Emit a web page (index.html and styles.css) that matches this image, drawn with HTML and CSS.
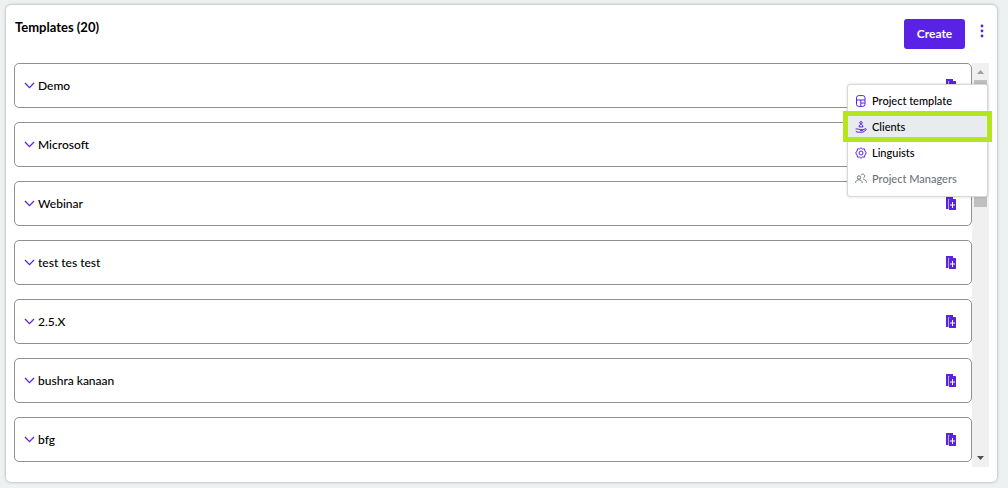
FILE: index.html
```html
<!DOCTYPE html>
<html lang="en">
<head>
    <meta charset="UTF-8">
    <meta name="viewport" content="width=device-width, initial-scale=1.0">
    <title>Templates</title>
    <link rel="stylesheet" href="styles.css">
</head>
<body>

<!-- Shared icons -->
<svg class="sprite" aria-hidden="true">
    <symbol id="chevron" viewBox="0 0 12 8">
        <path d="M1 1 5.500 5.600 10 1" fill="none" stroke="currentColor" stroke-width="1.300"/>
    </symbol>
    <symbol id="copy" viewBox="0 0 12 13">
        <path d="M1 0h7v2H3v10H1z" fill="currentColor"/>
        <path d="M3 2h1v10H3z" fill="#b9a5f5"/>
        <rect x="4" y="2" width="7" height="11" rx=".5" fill="currentColor"/>
        <path d="M7.500 5v6M5 8h5" stroke="#fff" stroke-width="1"/>
    </symbol>
</svg>

<main class="card">
    <header class="card-header">
        <h1>Templates (20)</h1>
        <div class="actions">
            <button type="button" class="create">Create</button>
            <button type="button" class="more" aria-label="More options">
                <svg width="4" height="14" viewBox="0 0 4 14"><g fill="currentColor"><circle cx="2" cy="2" r="1.400"/><circle cx="2" cy="7" r="1.400"/><circle cx="2" cy="12" r="1.400"/></g></svg>
            </button>
        </div>
    </header>

    <div class="scroll-area">
        <ul class="templates">
            <li class="template">
                <button type="button" class="toggle"><svg class="chevron"><use href="#chevron"/></svg>Demo</button>
                <button type="button" class="copy" aria-label="Copy Demo"><svg><use href="#copy"/></svg></button>
            </li>
            <li class="template">
                <button type="button" class="toggle"><svg class="chevron"><use href="#chevron"/></svg>Microsoft</button>
                <button type="button" class="copy" aria-label="Copy Microsoft"><svg><use href="#copy"/></svg></button>
            </li>
            <li class="template">
                <button type="button" class="toggle"><svg class="chevron"><use href="#chevron"/></svg>Webinar</button>
                <button type="button" class="copy" aria-label="Copy Webinar"><svg><use href="#copy"/></svg></button>
            </li>
            <li class="template">
                <button type="button" class="toggle"><svg class="chevron"><use href="#chevron"/></svg>test tes test</button>
                <button type="button" class="copy" aria-label="Copy test tes test"><svg><use href="#copy"/></svg></button>
            </li>
            <li class="template">
                <button type="button" class="toggle"><svg class="chevron"><use href="#chevron"/></svg>2.5.X</button>
                <button type="button" class="copy" aria-label="Copy 2.5.X"><svg><use href="#copy"/></svg></button>
            </li>
            <li class="template">
                <button type="button" class="toggle"><svg class="chevron"><use href="#chevron"/></svg>bushra kanaan</button>
                <button type="button" class="copy" aria-label="Copy bushra kanaan"><svg><use href="#copy"/></svg></button>
            </li>
            <li class="template">
                <button type="button" class="toggle"><svg class="chevron"><use href="#chevron"/></svg>bfg</button>
                <button type="button" class="copy" aria-label="Copy bfg"><svg><use href="#copy"/></svg></button>
            </li>
        </ul>
        <div class="scrollbar" aria-hidden="true">
            <svg class="arrow-up" viewBox="0 0 17 17"><path d="M5 11h7L8.500 7z" fill="currentColor"/></svg>
            <div class="thumb"></div>
            <svg class="arrow-down" viewBox="0 0 17 17"><path d="M5 6h7l-3.500 4z" fill="currentColor"/></svg>
        </div>
    </div>

    <div class="menu">
        <button type="button" class="menu-item">
            <svg viewBox="0 0 12 12" fill="none" stroke="currentColor"><rect x="1.500" y=".6" width="8.500" height="10.800" rx="2.200"/><path d="M1.500 5h8.500M5.800 5v6.400M5.800 8h4.200"/></svg>
            Project template
        </button>
        <button type="button" class="menu-item active">
            <svg viewBox="0 0 12 12" fill="none" stroke="currentColor"><circle cx="6" cy="1.800" r="1.200"/><path d="M4 5.900c0-3.200 4-3.200 4 0zM.6 8h2.200c1.200 0 1.500.6 2.500.6h2c.8 0 .8 1 0 1H5M7.500 9l3-1.300c.9-.2 1.200.8.5 1.200L8 11.200H3.200L.8 10.500"/></svg>
            Clients
        </button>
        <button type="button" class="menu-item">
            <svg viewBox="0 0 12 12" fill="none" stroke="currentColor"><path d="M4.500 2 6 .7 7.500 2l2-.1.400 2L11.300 6 9.900 8.100l-.4 2-2-.1L6 11.300 4.500 10l-2 .1-.4-2L.7 6l1.400-2.100.4-2z"/><circle cx="6" cy="6" r="2"/></svg>
            Linguists
        </button>
        <button type="button" class="menu-item" disabled>
            <svg viewBox="0 0 12 12" fill="none" stroke="currentColor"><circle cx="4" cy="4.500" r="1.700"/><path d="M.6 10c0-4.300 6.800-4.300 6.800 0M6 2.200c.6-1.700 3.700-1.400 3.700.9 0 1-.6 1.800-1.500 2M8.500 6.500c1.700 0 2.900 1 3 3"/></svg>
            Project Managers
        </button>
    </div>
</main>

</body>
</html>
```
FILE: styles.css
```css
/* Root colors */
:root {
    --primary-color: #5a22e5;
    --highlight-color: #b5e61d;
    --text-color: #000000;
    --muted-color: #6f757b;
    --border-color: #919191;
    --background-color: #edf1f2;
}

/* General styles */
* {
    box-sizing: border-box;
}

body {
    margin: 0;
    padding: 5px 11px 6px 6px;
    background: var(--background-color);
    color: var(--text-color);
    font-family: Lato, sans-serif;
    font-size: 12px;
    font-weight: 500;
    line-height: 16px;
}

button {
    padding: 0;
    border: 0;
    background: none;
    color: inherit;
    font: inherit;
    cursor: pointer;
}

.sprite {
    display: none;
}

.card {
    position: relative;
    padding: 14px 8px 15px;
    background: #ffffff;
    border-radius: 5px;
    box-shadow: 0 0 3px rgba(0, 0, 0, 0.35);
}

/* Header */
.card-header {
    display: flex;
    justify-content: space-between;
    margin-bottom: 14px;
    padding: 0 2px 0 1px;
}

h1 {
    margin: 0;
    font-size: 13px;
    font-weight: bold;
}

.actions {
    display: flex;
    gap: 11px;
}

.create {
    width: 61px;
    height: 30px;
    border-radius: 3px;
    background: var(--primary-color);
    color: #ffffff;
    font-weight: bold;
}

.more {
    display: flex;
    justify-content: center;
    width: 11px;
    height: 24px;
    padding-top: 5px;
    color: var(--primary-color);
}

/* Template list */
.scroll-area {
    display: flex;
}

.templates {
    display: flex;
    flex: 1;
    flex-direction: column;
    gap: 14px;
    margin: 0;
    padding: 0 0 5px;
    list-style: none;
}

.template {
    display: flex;
    align-items: center;
    justify-content: space-between;
    height: 45px;
    padding: 0 14px 0 9px;
    border: 1px solid var(--border-color);
    border-radius: 5px;
}

.toggle {
    display: flex;
    align-items: center;
    gap: 2px;
}

.chevron {
    width: 12px;
    height: 8px;
    color: var(--primary-color);
}

.copy svg {
    display: block;
    width: 12px;
    height: 13px;
    color: var(--primary-color);
}

/* Scrollbar */
.scrollbar {
    display: flex;
    flex-direction: column;
    align-items: center;
    width: 17px;
    background: #f0f0f0;
}

.scrollbar svg {
    width: 17px;
    height: 17px;
}

.thumb {
    width: 13px;
    height: 127px;
    background: #c0c0c0;
}

.arrow-up {
    color: #a0a0a0;
}

.arrow-down {
    margin-top: auto;
    color: #505050;
}

/* Options menu */
.menu {
    position: absolute;
    top: 79px;
    right: 9px;
    display: flex;
    flex-direction: column;
    gap: 5px;
    width: 141px;
    padding: 5px 0 7px;
    border: 1px solid #d8d8d8;
    border-radius: 3px;
    background: #ffffff;
    box-shadow: 0 0 3px rgba(0, 0, 0, 0.15);
}

.menu-item {
    display: flex;
    align-items: center;
    gap: 5px;
    height: 21px;
    padding-left: 7px;
    font-size: 11px;
}

.menu-item svg {
    width: 12px;
    height: 12px;
    color: var(--primary-color);
}

.menu-item.active {
    background: #e9ecef;
    outline: 5px solid var(--highlight-color);
}

.menu-item:disabled,
.menu-item:disabled svg {
    color: var(--muted-color);
}
```
